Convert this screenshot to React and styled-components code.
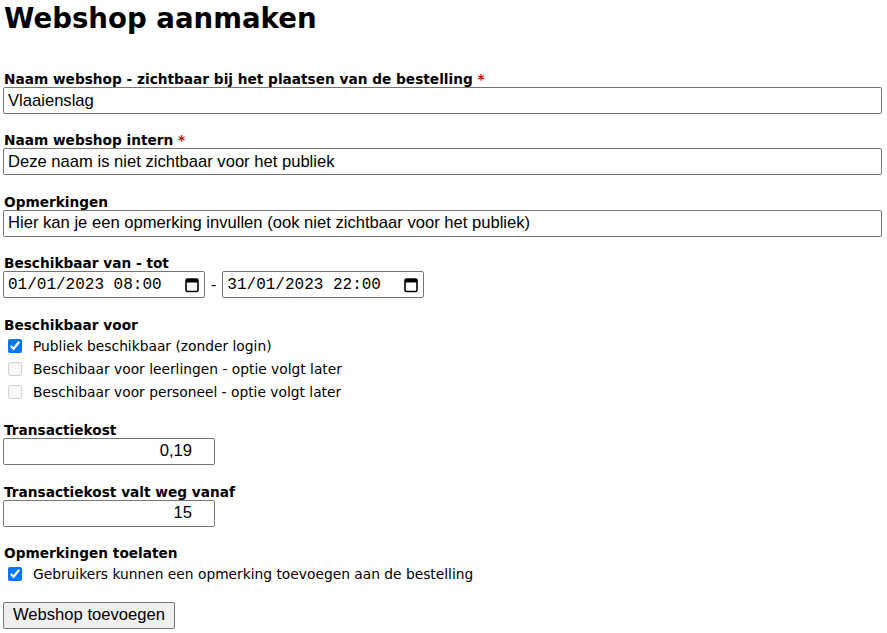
import React from 'react'
import styled, { createGlobalStyle } from 'styled-components'

const GlobalStyle = createGlobalStyle`
  html, body {
    margin: 0;
    padding: 0;
    background: #ffffff;
  }
  body {
    font-family: "DejaVu Sans", Verdana, sans-serif;
    color: #000;
  }
`;

const Page = styled.div`
  padding: 0 5px 0 3px;
`;

const Title = styled.h1`
  margin: 0 0 34px 1px;
  font-family: "DejaVu Sans", Verdana, sans-serif;
  font-size: 27.6px;
  font-weight: bold;
  line-height: 37px;
`;

const Field = styled.div`
  display: flex;
  flex-direction: column;
  align-items: flex-start;
  margin-bottom: ${p => p.$gap || 18.4}px;
`;

const Label = styled.label`
  display: block;
  margin-left: 1px;
  font-size: 13.7px;
  font-weight: bold;
  line-height: 16px;
`;

const Required = styled.span`
  color: #e00000;
`;

const TextInput = styled.input`
  box-sizing: border-box;
  width: ${p => p.$width || '100%'};
  height: 27px;
  margin: 0;
  padding: 2px ${p => (p.$align === 'right' ? '22px' : '4px')} 2px 4px;
  border: 1px solid #767676;
  border-radius: 2px;
  font-family: "Liberation Sans", Arial, sans-serif;
  font-size: 16.6px;
  color: #000;
  text-align: ${p => p.$align || 'left'};
  background: #fff;
  outline: none;
`;

const DateRow = styled.div`
  display: flex;
  align-items: center;
  gap: 6px;
`;

const DateBox = styled.div`
  box-sizing: border-box;
  display: flex;
  align-items: center;
  justify-content: space-between;
  width: 202px;
  height: 27px;
  padding: 0 5px 0 4px;
  border: 1px solid #767676;
  border-radius: 2px;
  font-family: "Liberation Mono", "Courier New", monospace;
  font-size: 16px;
  color: #000;
`;

const Dash = styled.span`
  font-family: "Liberation Sans", Arial, sans-serif;
  font-size: 16px;
`;

const CheckList = styled.div`
  display: flex;
  flex-direction: column;
  padding-top: 2px;
`;

const CheckRow = styled.label`
  display: flex;
  align-items: center;
  height: 23px;
  font-size: 13.8px;
  color: #000;
`;

const Check = styled.input`
  width: 14px;
  height: 14px;
  margin: 0 11px 0 5px;
  accent-color: #0075ff;
`;

const SubmitButton = styled.button`
  box-sizing: border-box;
  height: 27px;
  margin-top: 2px;
  padding: 0 9px;
  border: 1px solid #767676;
  border-radius: 2px;
  background: #efefef;
  font-family: "Liberation Sans", Arial, sans-serif;
  font-size: 16.6px;
  color: #000;
`;

function CalendarIcon() {
  return (
    <svg width="14" height="16" viewBox="0 0 14 16">
      <rect x="1" y="2" width="12" height="12.5" rx="1.5" fill="none" stroke="#000" strokeWidth="1.6" />
      <rect x="1" y="2" width="12" height="3.5" fill="#000" />
    </svg>
  );
}

function DateTime({ value }) {
  return (
    <DateBox>
      <span>{value}</span>
      <CalendarIcon />
    </DateBox>
  );
}

export default function App() {
  return (
    <Page>
      <GlobalStyle />
      <Title>Webshop aanmaken</Title>

      <Field>
        <Label>Naam webshop - zichtbaar bij het plaatsen van de bestelling <Required>*</Required></Label>
        <TextInput defaultValue="Vlaaienslag" />
      </Field>

      <Field>
        <Label>Naam webshop intern <Required>*</Required></Label>
        <TextInput defaultValue="Deze naam is niet zichtbaar voor het publiek" />
      </Field>

      <Field>
        <Label>Opmerkingen</Label>
        <TextInput defaultValue="Hier kan je een opmerking invullen (ook niet zichtbaar voor het publiek)" />
      </Field>

      <Field>
        <Label>Beschikbaar van - tot</Label>
        <DateRow>
          <DateTime value="01/01/2023 08:00" />
          <Dash>-</Dash>
          <DateTime value="31/01/2023 22:00" />
        </DateRow>
      </Field>

      <Field $gap={18}>
        <Label>Beschikbaar voor</Label>
        <CheckList>
          <CheckRow>
            <Check type="checkbox" defaultChecked />
            Publiek beschikbaar (zonder login)
          </CheckRow>
          <CheckRow>
            <Check type="checkbox" disabled />
            Beschibaar voor leerlingen - optie volgt later
          </CheckRow>
          <CheckRow>
            <Check type="checkbox" disabled />
            Beschibaar voor personeel - optie volgt later
          </CheckRow>
        </CheckList>
      </Field>

      <Field $gap={19}>
        <Label>Transactiekost</Label>
        <TextInput $width="212px" $align="right" defaultValue="0,19" />
      </Field>

      <Field>
        <Label>Transactiekost valt weg vanaf</Label>
        <TextInput $width="212px" $align="right" defaultValue="15" />
      </Field>

      <Field $gap={14}>
        <Label>Opmerkingen toelaten</Label>
        <CheckList>
          <CheckRow>
            <Check type="checkbox" defaultChecked />
            Gebruikers kunnen een opmerking toevoegen aan de bestelling
          </CheckRow>
        </CheckList>
      </Field>

      <SubmitButton>Webshop toevoegen</SubmitButton>
    </Page>
  );
}
